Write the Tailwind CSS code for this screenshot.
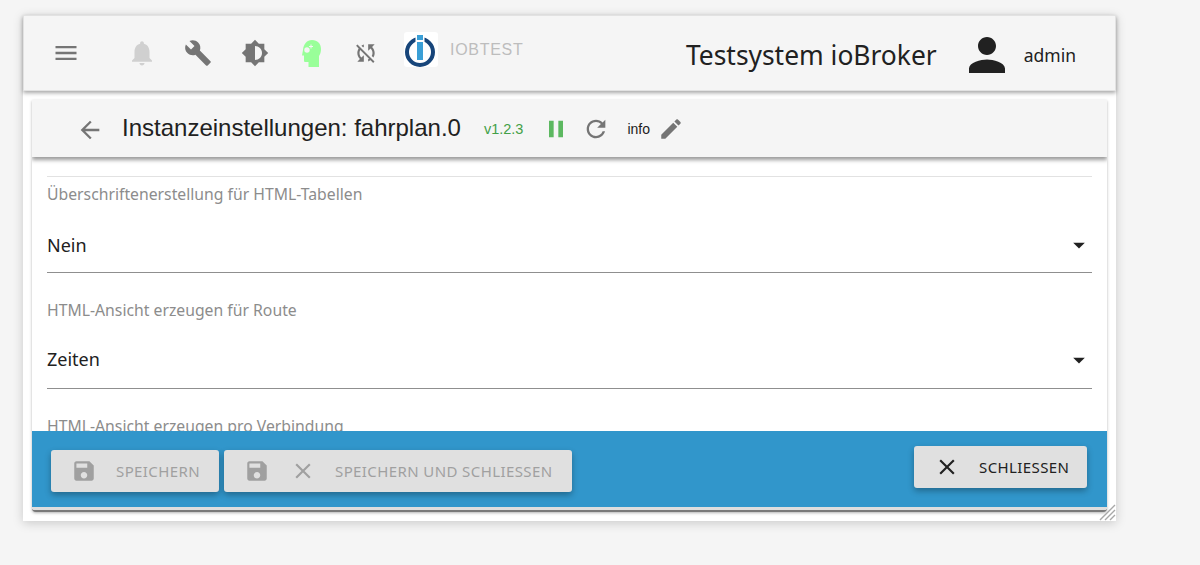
<!DOCTYPE html>
<html lang="de">
<head>
<meta charset="utf-8">
<script src="https://cdn.jsdelivr.net/npm/@tailwindcss/browser@4"></script>
</head>
<body class="bg-[#f5f5f5] w-[1200px] h-[565px] overflow-hidden font-['Noto_Sans',sans-serif]">
<div class="pt-[15px] pl-[23px]">
  <div class="relative w-[1093px] h-[506px] bg-white flex flex-col shadow-[0_2px_10px_rgba(0,0,0,0.18)]">
    <header class="h-[76px] shrink-0 bg-[#f5f5f5] border border-[#e2e2e2] shadow-[0_2px_4px_rgba(0,0,0,0.35)] flex items-center pl-[14px] relative z-20">
      <div class="w-14 h-14 flex items-center justify-center">
        <svg class="w-[28px] h-[28px] fill-[#757575]" viewBox="0 0 24 24"><path d="M3 18h18v-2H3v2zm0-5h18v-2H3v2zm0-7v2h18V6H3z"/></svg>
      </div>
      <div class="w-14 h-14 ml-5 flex items-center justify-center">
        <svg class="w-[30px] h-[30px] fill-[#d0d0d0]" viewBox="0 0 24 24"><path d="M12 22c1.100 0 2-.9 2-2h-4c0 1.100.890 2 2 2zm6-6v-5c0-3.070-1.640-5.640-4.500-6.320V4c0-.830-.670-1.500-1.500-1.500s-1.500.670-1.500 1.500v.680C7.630 5.360 6 7.920 6 11v5l-2 2v1h16v-1l-2-2z"/></svg>
      </div>
      <div class="w-14 h-14 flex items-center justify-center">
        <svg class="w-[28px] h-[28px] fill-[#757575]" viewBox="0 0 24 24"><path d="M22.700 19l-9.100-9.100c.9-2.300.4-5-1.500-6.900-2-2-5-2.400-7.400-1.300L9 6 6 9 1.600 4.700C.4 7.100.9 10.100 2.900 12.100c1.900 1.900 4.600 2.400 6.900 1.500l9.100 9.100c.4.4 1 .4 1.400 0l2.300-2.300c.5-.4.5-1.100.1-1.400z"/></svg>
      </div>
      <div class="w-14 h-14 ml-px flex items-center justify-center">
        <svg class="w-[28px] h-[28px] fill-[#757575]" viewBox="0 0 24 24"><path d="M20 15.310L23.310 12 20 8.690V4h-4.690L12 .69 8.690 4H4v4.690L.69 12 4 15.310V20h4.690L12 23.310 15.310 20H20v-4.690zM12 18V6c3.310 0 6 2.690 6 6s-2.690 6-6 6z"/></svg>
      </div>
      <div class="w-14 h-14 flex items-center justify-center">
        <svg class="w-[19px] h-[27px]" viewBox="0 0 19 27"><path fill="#99ff99" d="M10 0C15.500 0 19 3.500 19 9C19 12.500 18 14.500 17 16V27H6.500V22H3.500C2.500 22 2 21.500 2 20.500V15.500H0L1 10C1.500 4 5 0 10 0Z"/><circle cx="5" cy="10" r="2.700" fill="#f5f5f5"/><path fill="#f5f5f5" d="M8.500 4.500h1v1.500h1.500v1h-1.500v1.500h-1V7H7V6h1.500z"/></svg>
      </div>
      <div class="w-14 h-14 -ml-px flex items-center justify-center">
        <svg class="w-[26px] h-[26px] fill-[#757575]" viewBox="0 0 24 24"><path d="M10 6.350V4.260c-.8.210-1.550.540-2.230.960l1.460 1.460c.250-.120.500-.240.770-.330zm-7.140-.940l2.360 2.360C4.450 8.990 4 10.440 4 12c0 2.210.910 4.200 2.360 5.640L4 20h6v-6l-2.240 2.240C6.680 15.150 6 13.660 6 12c0-1 .250-1.940.680-2.770l8.080 8.080c-.250.130-.500.250-.770.340v2.090c.8-.210 1.550-.540 2.230-.960l2.360 2.360 1.270-1.270L4.140 4.140 2.860 5.410zM20 4h-6v6l2.240-2.240C17.320 8.850 18 10.340 18 12c0 1-.250 1.940-.680 2.770l1.460 1.460C19.550 15.010 20 13.560 20 12c0-2.210-.910-4.200-2.360-5.640L20 4z"/></svg>
      </div>
      <div class="w-[34px] h-[35px] ml-[10px] mb-[7px] bg-white rounded-[3px]">
        <svg class="w-[34px] h-[35px]" viewBox="0 0 34 35"><circle cx="16" cy="20" r="13" fill="none" stroke="#17457a" stroke-width="4"/><rect x="11.500" y="0" width="9" height="12" fill="#fff"/><rect x="13" y="3" width="6" height="5" fill="#3a9fd6"/><rect x="13" y="10" width="6" height="18" fill="#3a9fd6"/></svg>
      </div>
      <span class="ml-[12px] mb-[7px] font-['Liberation_Sans',sans-serif] text-[16px] text-[#bdbdbd] tracking-[0.7px]">IOBTEST</span>
      <div class="ml-auto mt-[4px] flex items-center pr-[39px]">
        <span class="mt-[2px] text-[26.4px] text-[#212121] mr-[23px]">Testsystem ioBroker</span>
        <svg class="w-[54px] h-[54px] fill-[#212121] mr-[10px]" viewBox="0 0 24 24"><path d="M12 12c2.210 0 4-1.790 4-4s-1.790-4-4-4-4 1.790-4 4 1.790 4 4 4zm0 2c-2.670 0-8 1.340-8 4v2h16v-2c0-2.660-5.330-4-8-4z"/></svg>
        <span class="text-[17.5px] text-[#212121]">admin</span>
      </div>
    </header>

    <div class="mt-[9px] mx-[9px] h-[412px] flex flex-col rounded-b-[4px] overflow-hidden bg-white shadow-[0_1px_3px_rgba(0,0,0,0.3)] border-b-[2px] border-[#7a7a7a]">
      <div class="h-[57px] shrink-0 bg-[#f5f5f5] shadow-[0_3px_4px_rgba(0,0,0,0.4)] flex items-center pl-[44px] relative z-10">
        <svg class="w-[28px] h-[28px] fill-[#757575] mt-[2px]" viewBox="0 0 24 24"><path d="M20 11H7.830l5.590-5.590L12 4l-8 8 8 8 1.410-1.410L7.830 13H20v-2z"/></svg>
        <span class="ml-[18px] -mt-[2px] font-['Liberation_Sans',sans-serif] text-[24px] text-[#212121]">Instanzeinstellungen: fahrplan.0</span>
        <span class="ml-[23px] mt-[3px] font-['Liberation_Sans',sans-serif] text-[14.5px] text-[#43a047]">v1.2.3</span>
        <svg class="ml-[19px] mt-[1px] w-[28px] h-[28px] fill-[#5cb860]" viewBox="0 0 24 24"><path d="M6 19h4V5H6v14zm8-14v14h4V5h-4z"/></svg>
        <svg class="ml-[12px] mt-[1px] w-[28px] h-[28px] fill-[#757575]" viewBox="0 0 24 24"><path d="M17.650 6.350C16.200 4.900 14.210 4 12 4c-4.420 0-7.990 3.580-7.990 8s3.570 8 7.990 8c3.730 0 6.840-2.550 7.730-6h-2.080c-.820 2.330-3.040 4-5.650 4-3.310 0-6-2.690-6-6s2.690-6 6-6c1.660 0 3.140.690 4.220 1.780L13 11h7V4l-2.350 2.350z"/></svg>
        <span class="ml-[17px] mt-[2px] font-['Liberation_Sans',sans-serif] text-[14px] text-[#212121]">info</span>
        <svg class="ml-[8px] mt-[1px] w-[26px] h-[26px] fill-[#757575]" viewBox="0 0 24 24"><path d="M3 17.250V21h3.750L17.810 9.940l-3.750-3.750L3 17.250zM20.710 7.040c.390-.390.390-1.020 0-1.410l-2.340-2.340c-.390-.390-1.020-.390-1.410 0l-1.830 1.830 3.750 3.750 1.830-1.830z"/></svg>
      </div>

      <div class="h-[274px] shrink-0 overflow-hidden px-[15px]">
        <div class="mt-[19px] h-px bg-[#e2e2e2]"></div>
        <div class="h-[96px] border-b border-[#8f8f8f]">
          <div class="h-[36px] flex items-center text-[15.75px] text-[#8c8c8c]">Überschriftenerstellung für HTML-Tabellen</div>
          <div class="h-[59px] pt-[5px] flex items-center justify-between text-[18px] text-[#212121]">
            <span>Nein</span>
            <svg class="w-[28px] h-[28px] fill-[#212121] -mr-px" viewBox="0 0 24 24"><path d="M7 10l5 5 5-5z"/></svg>
          </div>
        </div>
        <div class="h-[116px] pt-[19px] border-b border-[#8f8f8f]">
          <div class="h-[37px] flex items-center text-[15.75px] text-[#8c8c8c]">HTML-Ansicht erzeugen für Route</div>
          <div class="h-[59px] pt-[2px] flex items-center justify-between text-[18px] text-[#212121]">
            <span>Zeiten</span>
            <svg class="w-[28px] h-[28px] fill-[#212121] -mr-px" viewBox="0 0 24 24"><path d="M7 10l5 5 5-5z"/></svg>
          </div>
        </div>
        <div class="mt-[26px] text-[15.75px] leading-[22px] text-[#8c8c8c]">HTML-Ansicht erzeugen pro Verbindung</div>
      </div>

      <div class="flex-1 bg-[#3196cb] flex items-start justify-between pl-[19px] pr-[20px]">
        <div class="flex gap-[5px] mt-[19px]">
          <div class="h-[42px] w-[168px] rounded-[3px] bg-[#e0e0e0] shadow-[0_3px_6px_rgba(0,0,0,0.3)] flex items-center pl-[20px] text-[15px] tracking-[0.4px] text-[#a0a0a0]">
            <svg class="w-[26px] h-[26px] fill-[#a0a0a0]" viewBox="0 0 24 24"><path d="M17 3H5c-1.110 0-2 .9-2 2v14c0 1.100.890 2 2 2h14c1.100 0 2-.9 2-2V7l-4-4zm-5 16c-1.660 0-3-1.340-3-3s1.340-3 3-3 3 1.340 3 3-1.340 3-3 3zm3-10H5V5h10v4z"/></svg>
            <span class="ml-[19px]">SPEICHERN</span>
          </div>
          <div class="h-[42px] w-[348px] rounded-[3px] bg-[#e0e0e0] shadow-[0_3px_6px_rgba(0,0,0,0.3)] flex items-center pl-[20px] text-[15px] tracking-[0.4px] text-[#a0a0a0]">
            <svg class="w-[26px] h-[26px] fill-[#a0a0a0]" viewBox="0 0 24 24"><path d="M17 3H5c-1.110 0-2 .9-2 2v14c0 1.100.890 2 2 2h14c1.100 0 2-.9 2-2V7l-4-4zm-5 16c-1.660 0-3-1.340-3-3s1.340-3 3-3 3 1.340 3 3-1.340 3-3 3zm3-10H5V5h10v4z"/></svg>
            <svg class="ml-[20px] w-[26px] h-[26px] fill-[#a0a0a0]" viewBox="0 0 24 24"><path d="M19 6.410L17.590 5 12 10.590 6.410 5 5 6.410 10.590 12 5 17.590 6.410 19 12 13.410 17.590 19 19 17.590 13.410 12z"/></svg>
            <span class="ml-[19px]">SPEICHERN UND SCHLIESSEN</span>
          </div>
        </div>
        <div class="mt-[15px] h-[42px] w-[173px] rounded-[3px] bg-[#e0e0e0] shadow-[0_3px_6px_rgba(0,0,0,0.3)] flex items-center pl-[20px] text-[15px] tracking-[0.4px] text-[#212121]">
          <svg class="w-[26px] h-[26px] fill-[#212121]" viewBox="0 0 24 24"><path d="M19 6.410L17.590 5 12 10.590 6.410 5 5 6.410 10.590 12 5 17.590 6.410 19 12 13.410 17.590 19 19 17.590 13.410 12z"/></svg>
          <span class="ml-[19px]">SCHLIESSEN</span>
        </div>
      </div>
      <div class="h-[3px] shrink-0 bg-[#dedede]"></div>
    </div>

    <svg class="absolute right-0 bottom-0 w-[17px] h-[17px] stroke-[#a8a8a8]" viewBox="0 0 17 17" fill="none" stroke-width="1.400"><path d="M1 16L16 1M6 16L16 6M11 16L16 11"/></svg>
  </div>
</div>
</body>
</html>
